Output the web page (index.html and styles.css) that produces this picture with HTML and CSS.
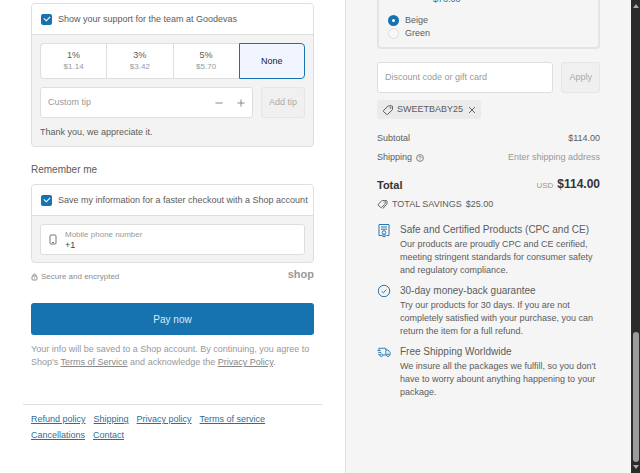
FILE: index.html
```html
<!DOCTYPE html>
<html lang="en">

<head>
    <meta charset="utf-8">
    <title>Checkout - Goodevas</title>
    <link rel="stylesheet" href="styles.css">
</head>

<body>
    <div class="page">
        <main class="checkout">
            <form>
                <section class="box">
                    <div class="box-header">
                        <input type="checkbox" id="support" class="check" checked>
                        <label for="support">Show your support for the team at Goodevas</label>
                    </div>
                    <div class="box-body">
                        <div class="tips">
                            <button type="button" class="tip">1%<small>$1.14</small></button>
                            <button type="button" class="tip">3%<small>$3.42</small></button>
                            <button type="button" class="tip">5%<small>$5.70</small></button>
                            <button type="button" class="tip selected">None</button>
                        </div>
                        <div class="field-row">
                            <div class="field">
                                <input type="text" placeholder="Custom tip" aria-label="Custom tip">
                                <button type="button" class="step" aria-label="Decrease tip">
                                    <svg width="8" height="8" viewBox="0 0 8 8"><path d="M.500 4h7" /></svg>
                                </button>
                                <button type="button" class="step" aria-label="Increase tip">
                                    <svg width="8" height="8" viewBox="0 0 8 8"><path d="M.500 4h7M4 .500v7" /></svg>
                                </button>
                            </div>
                            <button type="button" class="btn-muted">Add tip</button>
                        </div>
                        <p class="thanks">Thank you, we appreciate it.</p>
                    </div>
                </section>

                <h2>Remember me</h2>
                <section class="box">
                    <div class="box-header">
                        <input type="checkbox" id="save" class="check" checked>
                        <label for="save">Save my information for a faster checkout with a Shop account</label>
                    </div>
                    <div class="box-body">
                        <div class="field phone">
                            <svg width="8" height="11" viewBox="0 0 8 11"><rect x="1" y="1" width="6" height="9" rx="1" /><path d="M3 8.500h2" /></svg>
                            <div class="phone-text">
                                <label for="phone">Mobile phone number</label>
                                <input type="tel" id="phone" value="+1">
                            </div>
                        </div>
                    </div>
                </section>

                <div class="secure">
                    <svg width="7" height="8" viewBox="0 0 7 8"><rect x="1" y="3" width="5" height="4" rx="1" /><path d="M2 3V2.500a1.500 1.500 0 0 1 3 0V3M3.500 4.500v1" /></svg>
                    <span>Secure and encrypted</span>
                    <b class="shop">shop</b>
                </div>

                <button type="submit" class="pay">Pay now</button>
                <p class="terms">Your info will be saved to a Shop account. By continuing, you agree to Shop's <a href="#">Terms of Service</a> and acknowledge the <a href="#">Privacy Policy</a>.</p>
            </form>

            <footer>
                <a href="#">Refund policy</a>
                <a href="#">Shipping</a>
                <a href="#">Privacy policy</a>
                <a href="#">Terms of service</a>
                <a href="#">Cancellations</a>
                <a href="#">Contact</a>
            </footer>
        </main>

        <aside class="summary">
            <div class="upsell">
                <div class="price">$78.00</div>
                <label class="option"><input type="radio" name="color" checked>Beige</label>
                <label class="option"><input type="radio" name="color">Green</label>
            </div>

            <div class="field-row discount">
                <div class="field">
                    <input type="text" placeholder="Discount code or gift card" aria-label="Discount code or gift card">
                </div>
                <button type="button" class="btn-muted">Apply</button>
            </div>

            <div class="tag">
                <svg width="12" height="12" viewBox="0 0 12 12"><path d="M1.500 6.500 6 2.200q.4-.4 1-.4h2.600q.9 0 .9.900v2.300q0 .6-.4 1L5.800 10.300q-.6.6-1.200 0L1.500 7.600q-.5-.5 0-1.100z" /><circle cx="8.500" cy="3.800" r="0.500" /></svg>
                <span>SWEETBABY25</span>
                <button type="button" class="remove" aria-label="Remove discount">
                    <svg width="8" height="8" viewBox="0 0 8 8"><path d="M1 1l6 6M7 1L1 7" /></svg>
                </button>
            </div>

            <div class="line">
                <span>Subtotal</span>
                <span>$114.00</span>
            </div>
            <div class="line">
                <span class="with-icon">Shipping
                    <svg width="8" height="8" viewBox="0 0 8 8"><circle cx="4" cy="4" r="3.400" /><path d="M3 3.300a1 1 0 1 1 1.500.9q-.5.200-.5.700M4 5.700v.5" /></svg>
                </span>
                <span class="muted">Enter shipping address</span>
            </div>
            <div class="line total">
                <strong>Total</strong>
                <span><small>USD</small><strong class="amount">$114.00</strong></span>
            </div>
            <div class="savings">
                <svg width="11" height="11" viewBox="0 0 11 11"><path d="M1.200 5.300 4.500 2q.4-.4.900-.4h2q.8 0 .8.800v2q0 .5-.4.900L4.700 8.400q-.5.500-1 0L1.200 6.200q-.4-.5 0-.9zM8 1.600h1.200q.8 0 .8.800v2.200q0 .5-.4.900L5.800 9.600M6.300 3.300v.3" /></svg>
                <span>TOTAL SAVINGS</span>
                <span>$25.00</span>
            </div>

            <div class="perk">
                <svg width="14" height="15" viewBox="0 0 14 15"><path d="M5 12.500H2V1.500h10v11H9.500M4 4h6M4 6.200h6" /><circle cx="7" cy="9.500" r="1.800" /><path d="M6 11v3l1-.6 1 .6v-3" /></svg>
                <div>
                    <h3>Safe and Certified Products (CPC and CE)</h3>
                    <p>Our products are proudly CPC and CE cerified, meeting stringent standards for consumer safety and regulatory compliance.</p>
                </div>
            </div>
            <div class="perk">
                <svg width="14" height="14" viewBox="0 0 14 14"><circle cx="7" cy="7" r="5.700" /><path d="M4.600 7.200l1.700 1.600 3.100-3.300" /></svg>
                <div>
                    <h3>30-day money-back guarantee</h3>
                    <p>Try our products for 30 days. If you are not completely satisfied with your purchase, you can return the item for a full refund.</p>
                </div>
            </div>
            <div class="perk">
                <svg width="15" height="14" viewBox="0 0 15 14"><path d="M2 5V3h7.500v7.200H6.200M9.500 4.800h2.300l2.200 2.700v2.700h-.8M9.500 10.200h.8M.500 5.500H4M1.500 7.500h3M3.200 10.200H2V9" /><circle cx="4.700" cy="10.500" r="1.400" /><circle cx="11.700" cy="10.500" r="1.400" /></svg>
                <div>
                    <h3>Free Shipping Worldwide</h3>
                    <p>We insure all the packages we fulfill, so you don't have to worry abount anything happening to your package.</p>
                </div>
            </div>
        </aside>

        <div class="scrollbar">
            <svg width="6" height="4" viewBox="0 0 6 4"><path d="M0 4 3 0l3 4z" /></svg>
            <div class="thumb"></div>
            <svg width="6" height="4" viewBox="0 0 6 4"><path d="M0 0h6L3 4z" /></svg>
        </div>
    </div>
</body>

</html>
```
FILE: styles.css
```css
* {
    box-sizing: border-box;
}

body {
    margin: 0;
    font-family: "Liberation Sans", Arial, sans-serif;
    font-size: 9px;
    line-height: 13px;
    color: #5c5c5c;
    background: #fff;
}

button,
input {
    margin: 0;
    padding: 0;
    font: inherit;
    color: inherit;
}

p,
h2,
h3 {
    margin: 0;
    font-weight: normal;
}

svg {
    flex: none;
    fill: none;
    stroke: currentColor;
}

.page {
    display: grid;
    grid-template-columns: 345fr 286fr 9px;
    min-height: 100vh;
    overflow: hidden;
}

/* left column */

.checkout {
    padding: 3px 23px 0;
}

.checkout form {
    padding: 0 8px;
}

.box {
    border: 1px solid #dedede;
    border-radius: 4px;
    background: #f3f3f3;
    overflow: hidden;
}

.box-header {
    display: flex;
    align-items: center;
    gap: 6px;
    height: 31px;
    padding: 0 4px 0 9px;
    background: #fff;
    border-bottom: 1px solid #dedede;
}

.check {
    appearance: none;
    flex: none;
    width: 11px;
    height: 11px;
    border-radius: 2px;
    background: #1773b0;
    display: grid;
    place-items: center;
}

.check::before {
    content: "";
    width: 5px;
    height: 3px;
    margin-bottom: 2px;
    border-left: 1px solid #fff;
    border-bottom: 1px solid #fff;
    transform: rotate(-45deg);
}

.box-body {
    padding: 8px 8px 7px;
}

.tips {
    display: grid;
    grid-template-columns: repeat(4, 1fr);
    margin-bottom: 8px;
}

.tip {
    height: 36px;
    border: 1px solid #dedede;
    border-right: 0;
    background: #fff;
    line-height: 12px;
}

.tip:first-child {
    border-radius: 4px 0 0 4px;
}

.tip small {
    display: block;
    font-size: 8px;
    color: #999;
}

.tip.selected {
    border: 1px solid #1773b0;
    border-radius: 0 4px 4px 0;
    background: #f0f5ff;
    color: #222;
}

.field-row {
    display: flex;
    gap: 8px;
}

.field {
    flex: 1;
    display: flex;
    align-items: center;
    height: 31px;
    padding: 0 7px;
    border: 1px solid #dedede;
    border-radius: 3px;
    background: #fff;
}

.field input {
    flex: 1;
    width: 100%;
    min-width: 0;
    border: 0;
    outline: 0;
    background: transparent;
}

.field input::placeholder {
    color: #999;
}

.step {
    display: flex;
    margin-left: 14px;
    border: 0;
    background: none;
    color: #888;
}

.btn-muted {
    height: 31px;
    padding: 0 7px;
    border: 1px solid #e6e6e6;
    border-radius: 3px;
    background: #f0f0f0;
    color: #aaa;
}

.thanks {
    margin-top: 8px;
}

h2 {
    margin: 16px 0 7px;
    font-size: 10px;
    line-height: 14px;
}

.phone {
    gap: 8px;
    padding-left: 8px;
    color: #777;
}

.phone-text {
    flex: 1;
    line-height: 10px;
}

.phone-text label {
    display: block;
    font-size: 8px;
    color: #999;
}

.phone-text input {
    display: block;
    height: 10px;
    color: #444;
}

.secure {
    display: flex;
    align-items: center;
    gap: 3px;
    height: 40px;
    padding-bottom: 13px;
    font-size: 8px;
    color: #8c8c8c;
}

.shop {
    margin-left: auto;
    padding-bottom: 5px;
    font-size: 11px;
    color: #999;
}

.pay {
    display: block;
    width: 100%;
    height: 32px;
    border: 0;
    border-radius: 3px;
    background: #1773b0;
    color: #dcebf5;
    font-size: 10px;
}

.terms {
    margin: 8px 0 35px;
    color: #999;
}

.terms a {
    color: #888;
}

footer {
    display: flex;
    flex-wrap: wrap;
    column-gap: 8px;
    padding: 6px 8px 0;
    border-top: 1px solid #dedede;
    line-height: 16px;
}

footer a {
    color: #2b6f96;
}

/* right column */

.summary {
    padding: 0 31px;
    border-left: 1px solid #dedede;
    background: #f5f5f5;
}

.upsell {
    margin: -7px 0 13px;
    padding: 0 9px 7px;
    border: 2px solid #e4e4e4;
    border-top: 0;
    border-radius: 0 0 4px 4px;
}

.price {
    margin-bottom: 8px;
    padding-left: 45px;
    color: #1773b0;
}

.option {
    display: flex;
    align-items: center;
    gap: 6px;
    height: 13px;
}

.option input {
    appearance: none;
    width: 11px;
    height: 11px;
    border: 1px solid #dedede;
    border-radius: 50%;
    background: #f8f8f8;
}

.option input:checked {
    border: 4px solid #1773b0;
    background: #fff;
}

.tag {
    display: flex;
    align-items: center;
    gap: 3px;
    width: fit-content;
    height: 19px;
    margin: 7px 0 13px;
    padding: 0 5px;
    border-radius: 3px;
    background: #ebebeb;
}

.remove {
    display: flex;
    margin-left: 2px;
    border: 0;
    background: none;
    color: #666;
}

.line {
    display: flex;
    justify-content: space-between;
    align-items: center;
    margin-bottom: 6px;
}

.with-icon {
    display: flex;
    align-items: center;
    gap: 4px;
}

.with-icon svg {
    color: #808080;
}

.muted {
    color: #999;
}

.total {
    margin: 12px 0 4px;
    font-size: 11px;
    line-height: 16px;
    color: #333;
}

.total small {
    margin-right: 4px;
    font-size: 8px;
    font-weight: normal;
    color: #999;
}

.amount {
    font-size: 12px;
}

.savings {
    display: flex;
    align-items: center;
    gap: 4px;
    margin-bottom: 12px;
}

.perk {
    display: flex;
    gap: 9px;
    margin-bottom: 7px;
}

.perk > svg {
    width: 14px;
    color: #2b78ae;
}

.perk h3 {
    font-size: 10px;
    line-height: 14px;
    margin-bottom: 1px;
}

/* window scrollbar */

.scrollbar {
    display: flex;
    flex-direction: column;
    align-items: center;
    padding: 4px 0;
    background: #2b2b2b;
}

.scrollbar svg {
    fill: #aaa;
    stroke: none;
}

.thumb {
    width: 6px;
    height: 28%;
    margin: auto 0 3px;
    border-radius: 3px;
    background: #9c9c9c;
}
```
